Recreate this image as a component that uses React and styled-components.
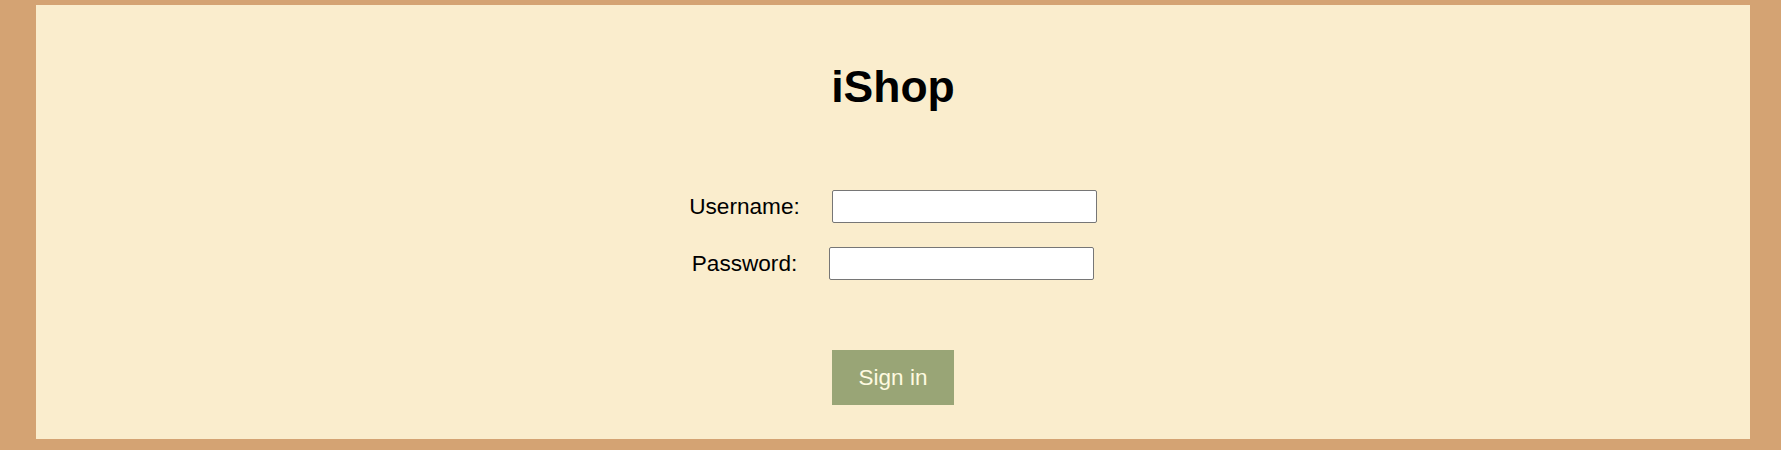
import React from "react";
import styled, { createGlobalStyle } from "styled-components";

const GlobalStyle = createGlobalStyle`
  body {
    margin: 0;
    font-family: "Liberation Sans", Arial, sans-serif;
  }
`;

const Page = styled.div`
  box-sizing: border-box;
  height: 450px;
  padding: 5px 31px 11px 36px;
  background-color: #d4a373;
`;

const Panel = styled.main`
  display: flex;
  flex-flow: column nowrap;
  align-items: center;
  height: 100%;
  padding-top: 57px;
  box-sizing: border-box;
  background-color: #faedcd;
`;

const Title = styled.h1`
  margin: 0 0 78px;
  font-size: 44.5px;
  line-height: 50px;
  font-weight: 700;
  color: #000;
`;

const Form = styled.form`
  display: flex;
  flex-flow: column nowrap;
  align-items: center;
  gap: 24px;
`;

const Row = styled.div`
  display: flex;
  flex-flow: row nowrap;
  align-items: center;
  gap: 32px;
`;

const Label = styled.label`
  font-size: 22.6px;
  line-height: 26px;
  color: #000;
`;

const Input = styled.input`
  box-sizing: border-box;
  width: 265px;
  height: 33px;
  padding: 0 4px;
  border: 1px solid #767676;
  border-radius: 2px;
  background-color: #fff;
  font-size: 16px;
`;

const SubmitButton = styled.button`
  margin-top: 46px;
  width: 122px;
  height: 55px;
  border: none;
  background-color: #99a576;
  color: #fefae0;
  font-family: "Liberation Sans", Arial, sans-serif;
  font-size: 22.5px;
`;

const App = () => {
  return (
    <Page>
      <GlobalStyle />
      <Panel>
        <Title>iShop</Title>
        <Form onSubmit={(e) => e.preventDefault()}>
          <Row>
            <Label htmlFor="username">Username:</Label>
            <Input id="username" type="text" />
          </Row>
          <Row>
            <Label htmlFor="password">Password:</Label>
            <Input id="password" type="password" />
          </Row>
          <SubmitButton type="submit">Sign in</SubmitButton>
        </Form>
      </Panel>
    </Page>
  );
};

export default App;
